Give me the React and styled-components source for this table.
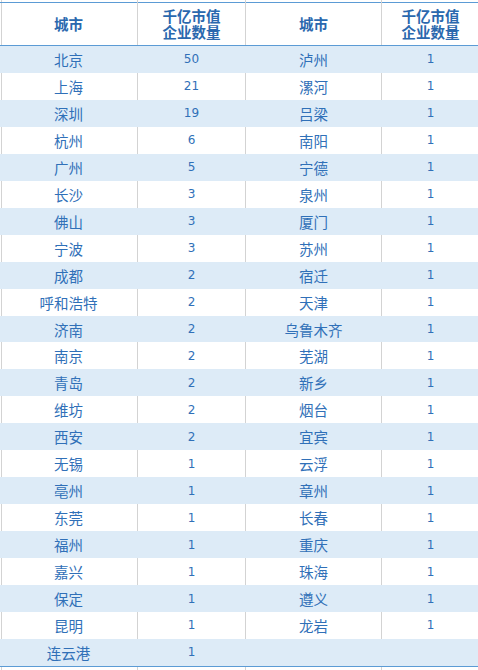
import React from "react";
import styled, { createGlobalStyle } from "styled-components";

const Global = createGlobalStyle`
  html, body { margin: 0; padding: 0; background: #ffffff; }
  body { font-family: "Noto Sans CJK SC", "DejaVu Sans", sans-serif; overflow: hidden; }
`;

const GRID = "138px 108px 136px 1fr";
const GREY = "#d3d3d3";
const BLUE_LINE = "#5b9bd5";
const BAND = "#ddebf7";

const Table = styled.div`
  width: 480px;
  display: flex;
  flex-direction: column;
`;

const HeaderRow = styled.div`
  display: grid;
  grid-template-columns: ${GRID};
  height: 45px;
  border-bottom: 1px solid ${BLUE_LINE};
  background:
    linear-gradient(${BLUE_LINE}, ${BLUE_LINE}) 0 2px / 100% 1px no-repeat,
    linear-gradient(${GREY}, ${GREY}) 1px 0 / 1px 100% no-repeat,
    #ffffff;
`;

const HeaderCell = styled.div`
  display: flex;
  align-items: center;
  justify-content: center;
  text-align: center;
  padding-top: 3px;
  border-right: 1px solid ${GREY};
  color: #2a68ae;
  font-weight: 700;
  font-size: 14.5px;
  line-height: 16px;
  font-family: "Noto Sans CJK SC", sans-serif;
`;

const DataRow = styled.div`
  display: grid;
  grid-template-columns: ${GRID};
  height: 26.96px;
  background: ${(p) =>
    p.$band
      ? BAND
      : `linear-gradient(${GREY}, ${GREY}) 1px 0 / 1px 100% no-repeat, #ffffff`};
`;

const CityCell = styled.div`
  display: flex;
  align-items: center;
  justify-content: center;
  border-right: 1px solid ${(p) => (p.$band ? "transparent" : GREY)};
  color: #3070b8;
  font-size: 14.5px;
  font-family: "Noto Sans CJK SC", sans-serif;
`;

const CountCell = styled.div`
  display: flex;
  align-items: center;
  justify-content: center;
  border-right: 1px solid ${(p) => (p.$band ? "transparent" : GREY)};
  color: #3070b8;
  font-size: 12px;
  font-family: "DejaVu Sans", sans-serif;
`;

const Bottom = styled.div`
  height: 3px;
  border-top: 1px solid ${BLUE_LINE};
  display: grid;
  grid-template-columns: ${GRID};
  background: linear-gradient(${GREY}, ${GREY}) 1px 0 / 1px 100% no-repeat;
`;

const Stub = styled.div`
  border-right: 1px solid ${GREY};
`;

const left = [
  ["北京", 50], ["上海", 21], ["深圳", 19], ["杭州", 6], ["广州", 5],
  ["长沙", 3], ["佛山", 3], ["宁波", 3], ["成都", 2], ["呼和浩特", 2],
  ["济南", 2], ["南京", 2], ["青岛", 2], ["维坊", 2], ["西安", 2],
  ["无锡", 1], ["亳州", 1], ["东莞", 1], ["福州", 1], ["嘉兴", 1],
  ["保定", 1], ["昆明", 1], ["连云港", 1],
];

const right = [
  "泸州", "漯河", "吕梁", "南阳", "宁德", "泉州", "厦门", "苏州", "宿迁",
  "天津", "乌鲁木齐", "芜湖", "新乡", "烟台", "宜宾", "云浮", "章州",
  "长春", "重庆", "珠海", "遵义", "龙岩", "",
];

export default function App() {
  return (
    <>
      <Global />
      <Table>
        <HeaderRow>
          <HeaderCell>城市</HeaderCell>
          <HeaderCell>千亿市值<br />企业数量</HeaderCell>
          <HeaderCell>城市</HeaderCell>
          <HeaderCell>千亿市值<br />企业数量</HeaderCell>
        </HeaderRow>
        {left.map(([city, n], i) => {
          const band = i % 2 === 0;
          const r = right[i];
          return (
            <DataRow key={city} $band={band}>
              <CityCell $band={band}>{city}</CityCell>
              <CountCell $band={band}>{n}</CountCell>
              <CityCell $band={band}>{r}</CityCell>
              <CountCell $band={band}>{r ? 1 : ""}</CountCell>
            </DataRow>
          );
        })}
        <Bottom>
          <Stub />
          <Stub />
          <Stub />
          <Stub />
        </Bottom>
      </Table>
    </>
  );
}
